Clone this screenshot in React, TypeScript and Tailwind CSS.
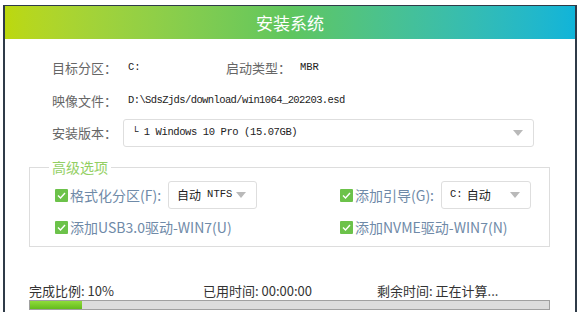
const cjk = "font-['Noto_Sans_CJK_SC','Noto_Sans',sans-serif]";
const mono = "font-['Liberation_Mono','Noto_Sans_CJK_SC',monospace]";

const Arrow = () => (
  <svg width="10" height="6" viewBox="0 0 10 6" className="shrink-0">
    <path d="M0 0 H10 L5 6 Z" fill="#b9b9b9" />
  </svg>
);

const Check = () => (
  <span className="flex h-[13px] w-[13px] shrink-0 items-center justify-center rounded-[1px] bg-[#6cc24a]">
    <svg width="9" height="7" viewBox="0 0 9 7">
      <path d="M1 3.5 L3.5 6 L8 1" fill="none" stroke="#fff" strokeWidth="1.4" />
    </svg>
  </span>
);

const Select = ({ children, w }: { children: React.ReactNode; w: string }) => (
  <div className={`flex h-[28px] ${w} items-center justify-between rounded-[3px] border border-[#dedede] bg-white pl-[8px] pr-[10px]`}>
    <div className="flex items-center text-[#222]">{children}</div>
    <Arrow />
  </div>
);

const Opt = ({ label }: { label: string }) => (
  <div className={`flex items-center gap-[2px] text-[14px] text-[#6f8aa8] ${cjk}`}>
    <Check />
    <span>{label}</span>
  </div>
);

export default function App() {
  return (
    <div className="h-[312px] w-[583px] overflow-hidden bg-white pl-[3px] pt-[5px]">
      <div className="h-[320px] w-[574px] border-x-2 border-t border-[#2f3b48] bg-white">
        <div className={`flex h-[33px] items-center justify-center bg-gradient-to-r from-[#bcd80c] via-[#5fc65e] to-[#10b4d9] text-[17px] text-white ${cjk}`}>
          安装系统
        </div>

        <div className="pl-[47px] pt-[15px]">
          <div className="flex h-[28px] items-center">
            <span className={`w-[76px] text-[13px] text-[#666] ${cjk}`}>目标分区：</span>
            <span className={`w-[98px] text-[10.5px] text-[#222] ${mono}`}>C:</span>
            <span className={`w-[74px] text-[13px] text-[#666] ${cjk}`}>启动类型：</span>
            <span className={`text-[10.5px] text-[#222] ${mono}`}>MBR</span>
          </div>
          <div className="mt-[5px] flex h-[28px] items-center">
            <span className={`w-[76px] text-[13px] text-[#666] ${cjk}`}>映像文件：</span>
            <span className={`text-[10.5px] tracking-[-0.6px] text-[#222] ${mono}`}>D:\SdsZjds/download/win1064_202203.esd</span>
          </div>
          <div className="mt-[4px] flex h-[28px] items-center">
            <span className={`w-[71px] text-[13px] text-[#666] ${cjk}`}>安装版本：</span>
            <Select w="w-[411px]">
              <span className={`text-[10.5px] tracking-[-0.4px] ${mono}`}>└ 1 Windows 10 Pro (15.07GB)</span>
            </Select>
          </div>
        </div>

        <fieldset className="ml-[24px] mt-[12px] h-[88px] w-[521px] border border-[#dddddd] pl-[25px]">
          <legend className={`-ml-[6px] px-[3px] text-[14px] leading-[16px] text-[#93cf63] ${cjk}`}>高级选项</legend>
          <div className="mt-[6px] flex h-[28px] items-center">
            <div className="flex w-[285px] items-center gap-[7px]">
              <Opt label="格式化分区(F):" />
              <Select w="w-[89px]">
                <span className={`text-[12px] ${cjk}`}>自动</span>
                <span className={`ml-[6px] text-[10.5px] ${mono}`}>NTFS</span>
              </Select>
            </div>
            <div className="flex items-center gap-[7px]">
              <Opt label="添加引导(G):" />
              <Select w="w-[90px]">
                <span className={`text-[10.5px] ${mono}`}>C:</span>
                <span className={`ml-[4px] text-[12px] ${cjk}`}>自动</span>
              </Select>
            </div>
          </div>
          <div className="mt-[8px] flex items-center">
            <div className="w-[285px]">
              <Opt label="添加USB3.0驱动-WIN7(U)" />
            </div>
            <Opt label="添加NVME驱动-WIN7(N)" />
          </div>
        </fieldset>

        <div className={`ml-[24px] mt-[36px] flex text-[13px] leading-[16px] text-[#333] ${cjk}`}>
          <span className="w-[174px]">完成比例: 10%</span>
          <span className="w-[174px]">已用时间: 00:00:00</span>
          <span>剩余时间: 正在计算...</span>
        </div>
        <div className="ml-[24px] mt-[1px] h-[10px] w-[521px] border border-[#a0a0a0] bg-[#dcdcdc]">
          <div className="h-full bg-gradient-to-b from-[#8fdc3a] to-[#64bb1c]" style={{ width: "10%" }} />
        </div>
      </div>
    </div>
  );
}
